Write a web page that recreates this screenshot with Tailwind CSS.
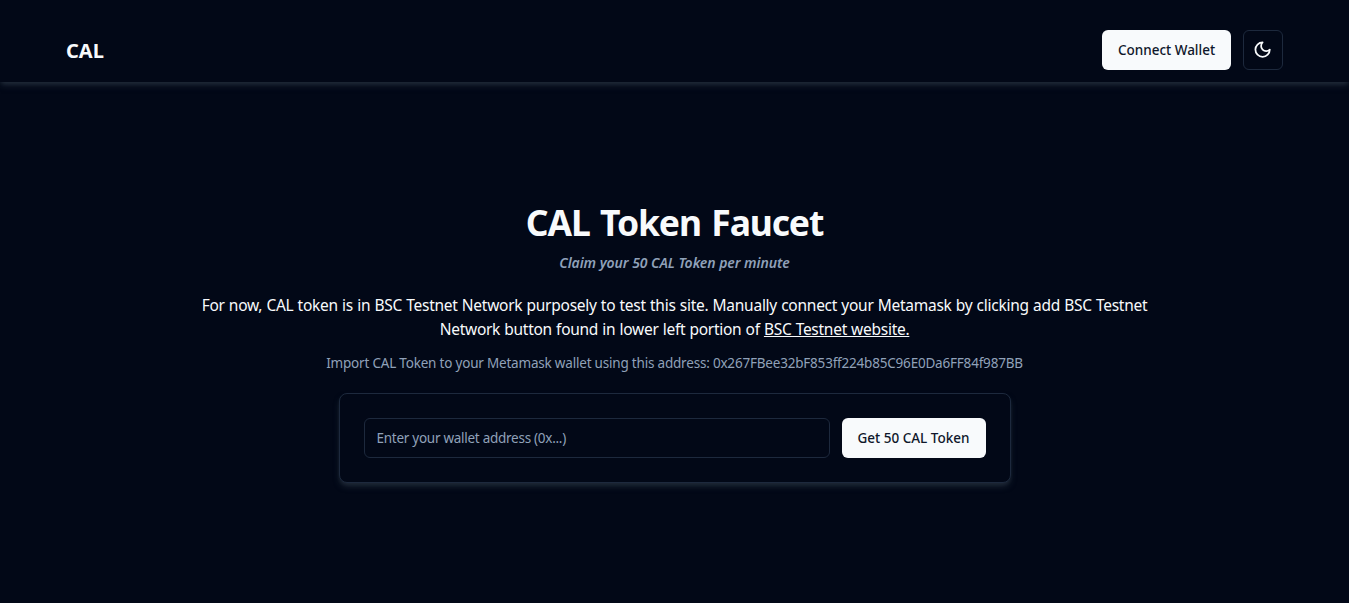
<!DOCTYPE html>
<html lang="en">
<head>
<meta charset="utf-8">
<title>CAL Token Faucet</title>
<script src="https://cdn.jsdelivr.net/npm/@tailwindcss/browser@4"></script>
</head>
<body class="h-screen overflow-hidden bg-[#020817] font-['Segoe_UI','Noto_Sans','Open_Sans',sans-serif] text-slate-50 flex flex-col">
<header class="h-[82px] shrink-0 flex items-center justify-between pt-[18px] pl-[66px] pr-[66px] shadow-[0_4px_6px_-1px_#1f2937,0_2px_4px_-2px_#1f2937]">
  <a class="pt-0.5 text-xl font-bold whitespace-nowrap">CAL</a>
  <div class="flex gap-3">
    <button class="h-10 w-[129px] rounded-md bg-slate-50 text-slate-900 text-[13.5px] font-medium whitespace-nowrap">Connect Wallet</button>
    <button class="size-10 rounded-md border border-slate-800 flex items-center justify-center pr-px pb-px" aria-label="Toggle theme">
      <svg class="size-[19.2px]" viewBox="0 0 24 24" fill="none" stroke="currentColor" stroke-width="2.2" stroke-linecap="round" stroke-linejoin="round"><path d="M12 3a6 6 0 0 0 9 9 9 9 0 1 1-9-9Z"/></svg>
    </button>
  </div>
</header>
<main class="flex flex-col items-center pt-[120px] text-center">
  <h1 class="text-[35.5px] leading-10 font-bold whitespace-nowrap tracking-[-1.15px] [word-spacing:2.4px]">CAL Token Faucet</h1>
  <p class="mt-[11px] text-sm leading-5 font-semibold italic text-slate-400 whitespace-nowrap tracking-[-0.06px]">Claim your 50 CAL Token per minute</p>
  <p class="mt-5 text-[15.5px] leading-6 whitespace-nowrap"><span class="tracking-[-0.26px] [word-spacing:0.42px]">For now, CAL token is in BSC Testnet Network purposely to test this site. Manually connect your Metamask by clicking add BSC Testnet</span><br><span class="tracking-[-0.27px] [word-spacing:0.4px]">Network button found in lower left portion of <a class="underline">BSC Testnet website.</a></span></p>
  <p class="mt-3 text-[13.5px] leading-5 text-slate-400 whitespace-nowrap tracking-[-0.2px]">Import CAL Token to your Metamask wallet using this address: 0x267FBee32bF853ff224b85C96E0Da6FF84f987BB</p>
  <div class="mt-5 w-[672px] h-[90px] rounded-lg border border-slate-800 p-6 flex gap-3 shadow-[0_4px_6px_-1px_#1f2937,0_2px_4px_-2px_#1f2937] bg-[#020817]">
    <input class="h-10 w-[466px] rounded-md border border-slate-800 bg-[#020817] px-3 text-[13.5px] tracking-[-0.27px] placeholder:text-slate-400" placeholder="Enter your wallet address (0x...)">
    <button class="h-10 w-36 rounded-md bg-slate-50 text-slate-900 text-[13.5px] font-medium whitespace-nowrap">Get 50 CAL Token</button>
  </div>
</main>
</body>
</html>
